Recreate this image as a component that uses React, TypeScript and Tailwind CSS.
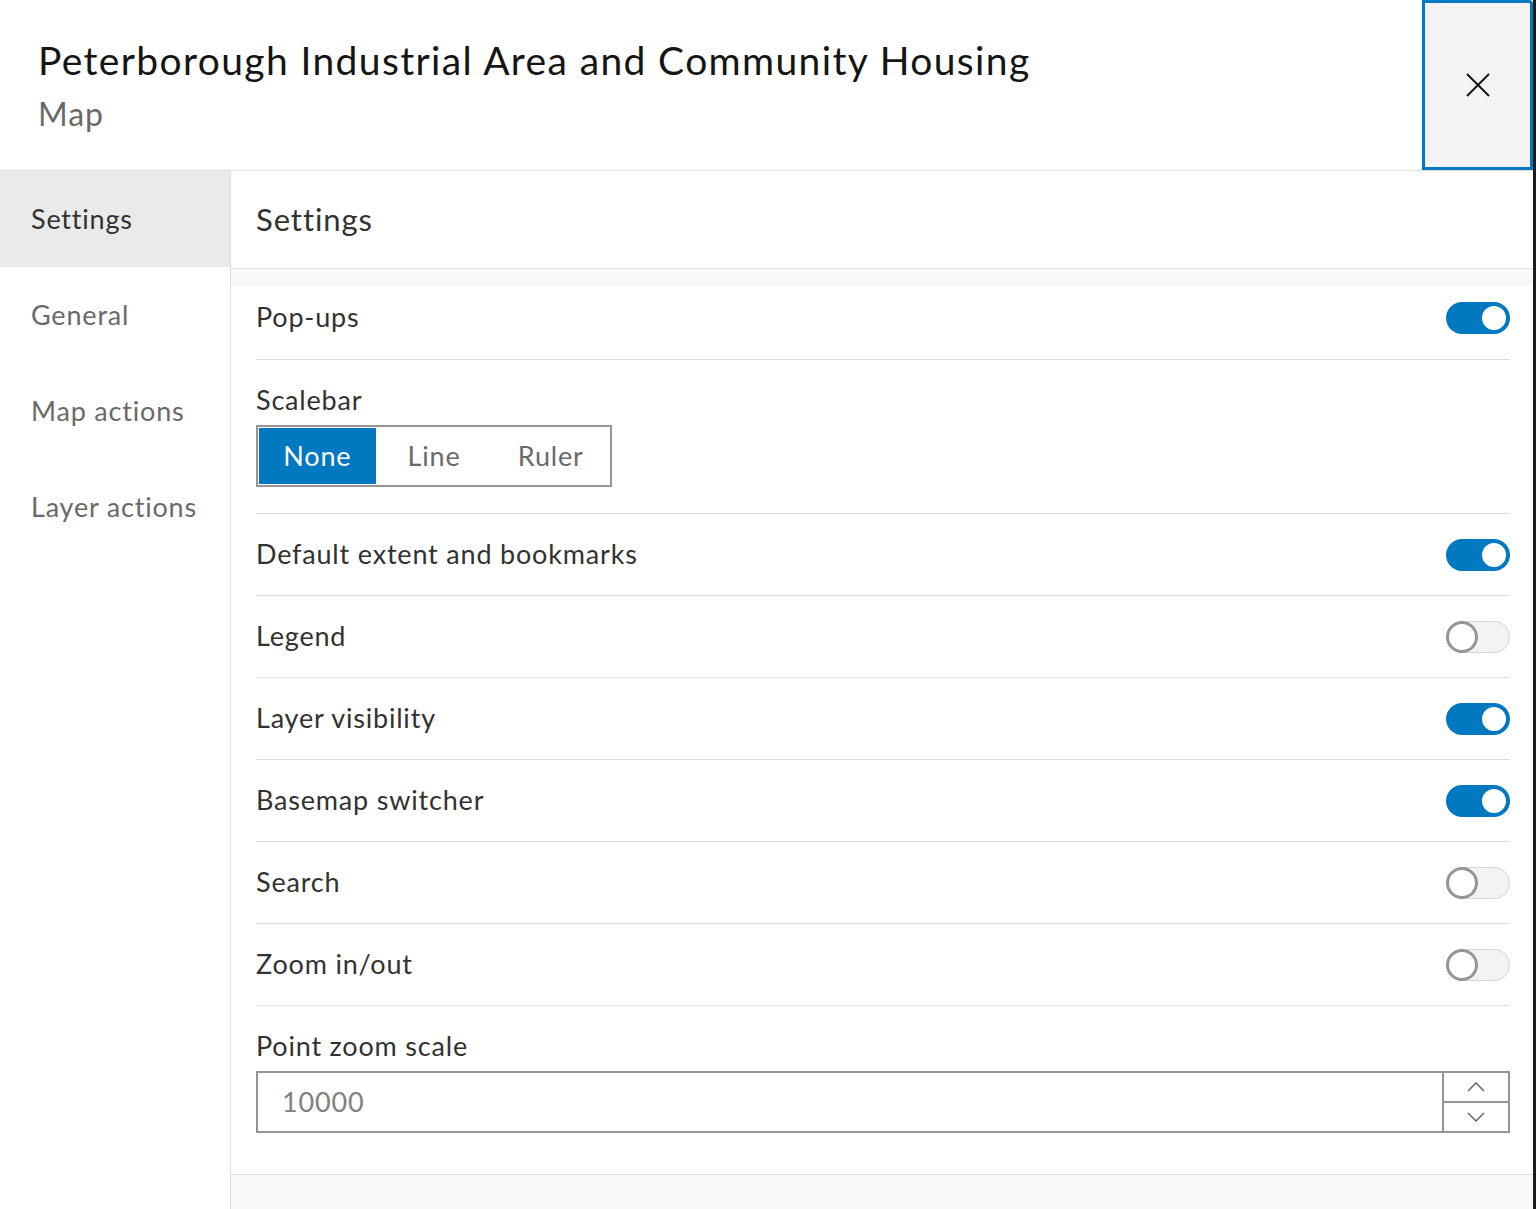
import { useState } from 'react'

const font = { fontFamily: 'Lato, "Noto Sans", sans-serif' }

function Toggle({ on }: { on: boolean }) {
  return (
    <div
      className={
        on
          ? 'relative w-[64px] h-[32px] rounded-full bg-[#0079c1]'
          : 'relative w-[64px] h-[32px] rounded-full bg-[#f3f3f3] border border-[#d4d4d4]'
      }
    >
      {on ? (
        <span className="absolute right-[1px] top-[1px] w-[30px] h-[30px] rounded-full bg-white border-[3px] border-[#0079c1]" />
      ) : (
        <span className="absolute left-[-1px] top-[-1px] w-[32px] h-[32px] rounded-full bg-white border-[3px] border-[#959595]" />
      )}
    </div>
  )
}

function Row({ label, on, first }: { label: string; on: boolean; first?: boolean }) {
  return (
    <div
      className={
        first
          ? 'flex items-center justify-between h-[74px] pb-[10px] border-b border-[#dfdfdf]'
          : 'flex items-center justify-between h-[82px] border-b border-[#dfdfdf]'
      }
    >
      <span className="text-[27px] tracking-[0.03em] text-[#323232]">{label}</span>
      <Toggle on={on} />
    </div>
  )
}

export default function App() {
  const [scale, setScale] = useState('None')
  const nav = ['Settings', 'General', 'Map actions', 'Layer actions']

  return (
    <div style={font} className="w-[1536px] h-[1209px] flex flex-col bg-white overflow-hidden border-r-[3px] border-[#1c1c1c]">
      {/* Header */}
      <header className="h-[171px] flex border-b border-[#dfdfdf] shrink-0">
        <div className="flex-1 pl-[38px] pt-[36px]">
          <h1 className="text-[39px] leading-[48px] tracking-[0.035em] text-[#151515]">
            Peterborough Industrial Area and Community Housing
          </h1>
          <p className="text-[32px] leading-[40px] tracking-[0.03em] text-[#6a6a6a] mt-[10px]">Map</p>
        </div>
        <button className="w-[111px] h-[170px] bg-[#f3f3f3] border-[3px] border-[#0079c1] rounded-tr-[4px] flex items-center justify-center cursor-pointer">
          <svg width="26" height="26" viewBox="0 0 26 26" fill="none" stroke="#151515" strokeWidth="2">
            <path d="M2 2 L24 24 M24 2 L2 24" />
          </svg>
        </button>
      </header>

      <div className="flex-1 flex min-h-0">
        {/* Side nav */}
        <nav className="w-[231px] shrink-0 border-r border-[#dfdfdf] flex flex-col">
          {nav.map((n, i) => (
            <div
              key={n}
              className={
                i === 0
                  ? 'h-[96px] flex items-center pl-[31px] text-[27px] tracking-[0.03em] text-[#323232] bg-[#eaeaea]'
                  : 'h-[96px] flex items-center pl-[31px] text-[27px] tracking-[0.03em] text-[#6a6a6a]'
              }
            >
              {n}
            </div>
          ))}
        </nav>

        {/* Content */}
        <main className="flex-1 flex flex-col min-w-0">
          <div className="h-[98px] flex items-center pl-[25px] border-b border-[#dfdfdf] text-[31px] tracking-[0.03em] text-[#323232]">
            Settings
          </div>
          <div className="h-[17px] bg-[#f8f8f8]" />
          <div className="pl-[25px] pr-[23px] border-b border-[#dfdfdf]">
            <Row label="Pop-ups" on first />

            <div className="pt-[23px] pb-[26px] border-b border-[#dfdfdf]">
              <div className="text-[27px] leading-[34px] tracking-[0.03em] text-[#323232]">Scalebar</div>
              <div className="mt-[8px] w-[356px] h-[62px] border-2 border-[#959595] p-px flex">
                {['None', 'Line', 'Ruler'].map((s) => (
                  <button
                    key={s}
                    onClick={() => setScale(s)}
                    className={
                      scale === s
                        ? 'flex-1 bg-[#0079c1] text-white text-[27px] tracking-[0.03em] cursor-pointer'
                        : 'flex-1 bg-white text-[#6a6a6a] text-[27px] tracking-[0.03em] cursor-pointer'
                    }
                  >
                    {s}
                  </button>
                ))}
              </div>
            </div>

            <Row label="Default extent and bookmarks" on />
            <Row label="Legend" on={false} />
            <Row label="Layer visibility" on />
            <Row label="Basemap switcher" on />
            <Row label="Search" on={false} />
            <Row label="Zoom in/out" on={false} />

            <div className="pt-[23px] pb-[41px]">
              <div className="text-[27px] leading-[34px] tracking-[0.03em] text-[#323232]">Point zoom scale</div>
              <div className="mt-[8px] h-[62px] border-2 border-[#959595] flex">
                <div className="flex-1 flex items-center pl-[24px] text-[27px] tracking-[0.03em] text-[#808080]">10000</div>
                <div className="w-[66px] border-l-2 border-[#959595] flex flex-col">
                  <div className="flex-1 flex items-center justify-center border-b-2 border-[#959595]">
                    <svg width="18" height="10" viewBox="0 0 18 10" fill="none" stroke="#6a6a6a" strokeWidth="1.6">
                      <path d="M1 9 L9 1 L17 9" />
                    </svg>
                  </div>
                  <div className="flex-1 flex items-center justify-center">
                    <svg width="18" height="10" viewBox="0 0 18 10" fill="none" stroke="#6a6a6a" strokeWidth="1.6">
                      <path d="M1 1 L9 9 L17 1" />
                    </svg>
                  </div>
                </div>
              </div>
            </div>
          </div>
          <div className="flex-1 bg-[#f8f8f8]" />
        </main>
      </div>
    </div>
  )
}
